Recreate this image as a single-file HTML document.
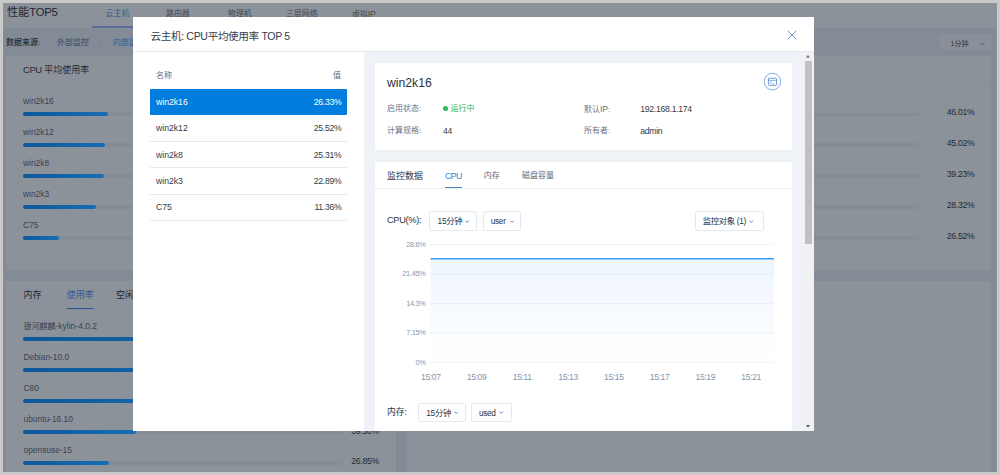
<!DOCTYPE html>
<html lang="zh-CN">
<head>
<meta charset="utf-8">
<title>性能TOP5</title>
<style>
*{box-sizing:border-box;margin:0;padding:0}
html,body{width:1000px;height:475px;overflow:hidden}
body{background:#c9c9c9;font-family:"Liberation Sans","Noto Sans CJK SC",sans-serif;color:#2b3340;position:relative}
.abs{position:absolute}
.t{position:absolute;white-space:nowrap;line-height:1;transform:translateY(-50%)}
#page{position:absolute;left:3px;top:3px;width:994px;height:469px;background:#838b96;overflow:hidden}
/* everything inside #page is positioned in page coords minus 3 */
#page .in{position:absolute;left:-3px;top:-3px;width:1000px;height:475px}
.topbar{left:3px;top:3px;width:994px;height:25px;background:#8c929a}
.card{background:#8c929a;border-radius:1.5px}
.dk{color:#2e3540}
.track{position:absolute;height:3.7px;margin-top:-0.2px;border-radius:2px;background:#858c96}
.fill{position:absolute;left:0;top:0;height:100%;border-radius:2px;background:linear-gradient(to right,#0d5899,#176db3)}
.sep{position:absolute;height:1px;background:#868d96}
/* modal */
#modal{position:absolute;left:133px;top:17px;width:680.5px;height:414.1px;background:#fff;overflow:hidden}
#modal .m{position:absolute;left:-133px;top:-17px;width:1000px;height:475px}
.row{position:absolute;left:150.3px;width:196.7px;height:26.3px;border-bottom:1px solid #e6e9ee;font-size:8.67px;color:#333b47}
.row .n{position:absolute;left:5.7px;top:49%;transform:translateY(-50%);line-height:1}
.row .v{position:absolute;right:5.6px;top:49%;transform:translateY(-50%);line-height:1;font-size:8.67px;letter-spacing:-0.3px}
.row.sel{background:#007ddd;color:#fff;border-bottom:none;border-radius:1px}
.sel2{position:absolute;border:1px solid #e4e8ef;border-radius:2px;background:#fff;height:20px;font-size:8.3px;letter-spacing:-0.3px;color:#2b3340}
.sel2 span{position:absolute;left:7.3px;top:50%;transform:translateY(-50%);line-height:1;white-space:nowrap}
.chev{position:absolute;top:50%;margin-top:-1.2px}
.lbl{color:#6b7686;font-size:8px}
.val{color:#333b47;font-size:8.67px;letter-spacing:-0.28px}
</style>
</head>
<body>
<div id="page"><div class="in">
  <div class="abs topbar"></div>
  <div class="t dk" style="left:7px;top:13.4px;font-size:11.3px;color:#1f2630;letter-spacing:-0.2px">性能TOP5</div>
  <div class="t" style="left:105.6px;top:13.8px;font-size:7.9px;color:#2f5a94">云主机</div>
  <div class="abs" style="left:92px;top:26.4px;width:52px;height:2px;background:#56709a"></div>
  <div class="t" style="left:166px;top:13.8px;font-size:7.9px;color:#414955">路由器</div>
  <div class="t" style="left:228px;top:13.8px;font-size:7.9px;color:#414955">物理机</div>
  <div class="t" style="left:286px;top:13.8px;font-size:7.9px;color:#414955">三层网络</div>
  <div class="t" style="left:352px;top:13.8px;font-size:7.9px;color:#414955">虚拟<span style="font-size:8.8px;letter-spacing:-0.2px">IP</span></div>

  <div class="t" style="left:6px;top:42.5px;font-size:8px;color:#232a34;font-weight:500">数据来源:</div>
  <div class="t" style="left:57px;top:42.5px;font-size:8px;color:#3f4855">外部监控</div>
  <div class="abs" style="left:100px;top:37px;width:1px;height:11px;background:#7b838d"></div>
  <div class="t" style="left:113px;top:42.5px;font-size:8px;color:#2f5a94">内部监控</div>

  <div class="abs" style="left:940.3px;top:34.3px;width:50.7px;height:15.7px;background:#8a9099;border-radius:1px"></div>
  <div class="t" style="left:950.5px;top:43.3px;font-size:7px;color:#2e3540">1分钟</div>
  <svg class="abs" style="left:980px;top:41.6px" width="5.2" height="3.6" viewBox="0 0 5.2 3.6"><path d="M0.5 0.6 L2.6 2.8 L4.7 0.6" fill="none" stroke="#3c5f92" stroke-width="0.9"/></svg>

  <!-- left card 1 -->
  <div class="abs card" style="left:6px;top:56.3px;width:390px;height:213.7px"></div>
  <div class="sep" style="left:6px;top:83.3px;width:390px"></div>
  <div class="t" style="left:23px;top:70px;font-size:9px;color:#232a34"><span style="font-size:9.4px;letter-spacing:-0.35px">CPU</span> 平均使用率</div>
  <div class="t" style="left:23px;top:101.3px;font-size:8.4px;color:#3a424e">win2k16</div>
  <div class="track" style="left:23px;top:112.5px;width:320px"><div class="fill" style="width:85px"></div></div>
  <div class="t" style="left:23px;top:132.2px;font-size:8.4px;color:#3a424e">win2k12</div>
  <div class="track" style="left:23px;top:143.4px;width:320px"><div class="fill" style="width:82px"></div></div>
  <div class="t" style="left:23px;top:163px;font-size:8.4px;color:#3a424e">win2k8</div>
  <div class="track" style="left:23px;top:174.3px;width:320px"><div class="fill" style="width:81px"></div></div>
  <div class="t" style="left:23px;top:193.9px;font-size:8.4px;color:#3a424e">win2k3</div>
  <div class="track" style="left:23px;top:205.2px;width:320px"><div class="fill" style="width:73px"></div></div>
  <div class="t" style="left:23px;top:224.8px;font-size:8.4px;color:#3a424e">C75</div>
  <div class="track" style="left:23px;top:236.1px;width:320px"><div class="fill" style="width:36px"></div></div>

  <!-- left card 2 -->
  <div class="abs card" style="left:6px;top:280.8px;width:390px;height:200px"></div>
  <div class="sep" style="left:6px;top:308.5px;width:390px"></div>
  <div class="t" style="left:23.5px;top:295px;font-size:9px;color:#232a34">内存</div>
  <div class="t" style="left:66.8px;top:295px;font-size:9px;color:#2f5a94">使用率</div>
  <div class="abs" style="left:66.8px;top:307.8px;width:27px;height:1.5px;background:#1f5a9c"></div>
  <div class="t" style="left:116px;top:295px;font-size:9px;color:#232a34">空闲</div>
  <div class="t" style="left:23.5px;top:326px;font-size:8.5px;color:#3a424e"><span style="font-size:8px">银河麒麟</span>-kylin-4.0.2</div>
  <div class="track" style="left:23px;top:337.5px;width:320px"><div class="fill" style="width:300px"></div></div>
  <div class="t" style="left:23.5px;top:356.8px;font-size:8.4px;color:#3a424e">Debian-10.0</div>
  <div class="track" style="left:23px;top:368.4px;width:320px"><div class="fill" style="width:280px"></div></div>
  <div class="t" style="left:23.5px;top:387.7px;font-size:8.4px;color:#3a424e">C80</div>
  <div class="track" style="left:23px;top:399.4px;width:320px"><div class="fill" style="width:200px"></div></div>
  <div class="t" style="left:23.5px;top:418.7px;font-size:8.4px;color:#3a424e">ubuntu-16.10</div>
  <div class="track" style="left:23px;top:430.3px;width:320px"><div class="fill" style="width:113px"></div></div>
  <div class="t" style="left:351.3px;top:430.5px;font-size:8.67px;letter-spacing:-0.3px;color:#232a34">39.50%</div>
  <div class="t" style="left:23.5px;top:449.6px;font-size:8.4px;color:#3a424e">opensuse-15</div>
  <div class="track" style="left:23px;top:461px;width:320px"><div class="fill" style="width:86px"></div></div>
  <div class="t" style="left:351.3px;top:461.3px;font-size:8.67px;letter-spacing:-0.3px;color:#232a34">26.85%</div>

  <!-- right card -->
  <div class="abs card" style="left:407px;top:56.3px;width:584px;height:213.7px"></div>
  <div class="sep" style="left:407px;top:83.3px;width:584px"></div>
  <div class="track" style="left:424px;top:112.7px;width:495px"></div>
  <div class="track" style="left:424px;top:143.6px;width:495px"></div>
  <div class="track" style="left:424px;top:174.5px;width:495px"></div>
  <div class="track" style="left:424px;top:205.4px;width:495px"></div>
  <div class="track" style="left:424px;top:236.3px;width:495px"></div>
  <div class="t" style="left:946.8px;top:112.4px;font-size:8.67px;letter-spacing:-0.3px;color:#232a34">46.01%</div>
  <div class="t" style="left:946.8px;top:143.3px;font-size:8.67px;letter-spacing:-0.3px;color:#232a34">45.02%</div>
  <div class="t" style="left:946.8px;top:174.3px;font-size:8.67px;letter-spacing:-0.3px;color:#232a34">39.23%</div>
  <div class="t" style="left:946.8px;top:205.2px;font-size:8.67px;letter-spacing:-0.3px;color:#232a34">28.32%</div>
  <div class="t" style="left:946.8px;top:236.1px;font-size:8.67px;letter-spacing:-0.3px;color:#232a34">26.52%</div>
  <div class="abs card" style="left:407px;top:280.8px;width:584px;height:200px"></div>
</div></div>

<div id="modal"><div class="m">
  <div class="t" style="left:150.5px;top:35.7px;font-size:10.6px;letter-spacing:-0.36px;color:#363e4b">云主机: CPU平均使用率 TOP 5</div>
  <svg class="abs" style="left:787px;top:29.5px" width="10" height="10" viewBox="0 0 10 10"><path d="M0.8 0.8 L9.2 9.2 M9.2 0.8 L0.8 9.2" fill="none" stroke="#6f8fc6" stroke-width="1"/></svg>
  <div class="abs" style="left:133px;top:50.5px;width:680px;height:1px;background:#e4e8ee"></div>
  <!-- right panel bg -->
  <div class="abs" style="left:363.5px;top:51.5px;width:450px;height:380px;background:#eff2f7"></div>
  <!-- list -->
  <div class="t" style="left:156px;top:75.5px;font-size:8px;color:#626b79">名称</div>
  <div class="t" style="left:333px;top:75.5px;font-size:8px;color:#626b79">值</div>
  <div class="row sel" style="top:88.8px;height:26px"><span class="n">win2k16</span><span class="v">26.33%</span></div>
  <div class="row" style="top:115.8px"><span class="n">win2k12</span><span class="v">25.52%</span></div>
  <div class="row" style="top:142.15px"><span class="n">win2k8</span><span class="v">25.31%</span></div>
  <div class="row" style="top:168.5px"><span class="n">win2k3</span><span class="v">22.89%</span></div>
  <div class="row" style="top:194.8px"><span class="n">C75</span><span class="v">11.36%</span></div>

  <!-- info card -->
  <div class="abs" style="left:375px;top:62.6px;width:417.2px;height:87.7px;background:#fff"></div>
  <div class="t" style="left:387px;top:82.5px;font-size:12.2px;color:#2b3340">win2k16</div>
  <svg class="abs" style="left:763px;top:72.3px" width="19" height="19" viewBox="0 0 19 19">
    <circle cx="9.45" cy="9.6" r="8.3" fill="#fff" stroke="#6f9bdb" stroke-width="0.85"/>
    <rect x="5.4" y="6.2" width="8.2" height="7.1" rx="0.8" fill="none" stroke="#4f86d0" stroke-width="0.85"/>
    <path d="M5.4 8.3 H13.6" stroke="#4f86d0" stroke-width="0.7"/>
    <path d="M7.2 9.6 L8.5 10.6 L7.2 11.6 M9.3 11.8 H10.9" fill="none" stroke="#4f86d0" stroke-width="0.6"/>
  </svg>
  <div class="t lbl" style="left:387px;top:108.6px">启用状态:</div>
  <div class="abs" style="left:442.8px;top:105.9px;width:5.5px;height:5.5px;border-radius:50%;background:#2fb85f"></div>
  <div class="t" style="left:450.5px;top:108.6px;font-size:8px;color:#2db35a">运行中</div>
  <div class="t lbl" style="left:584px;top:108.6px">默认<span style="font-size:8.8px;letter-spacing:-0.2px">IP</span>:</div>
  <div class="t val" style="left:640.2px;top:108.6px">192.168.1.174</div>
  <div class="t lbl" style="left:387px;top:131px">计算规格:</div>
  <div class="t val" style="left:443px;top:131px">44</div>
  <div class="t lbl" style="left:584px;top:131px">所有者:</div>
  <div class="t val" style="left:640.2px;top:131px">admin</div>

  <!-- monitor card -->
  <div class="abs" style="left:375px;top:161.5px;width:417.2px;height:280px;background:#fff"></div>
  <div class="t" style="left:387px;top:175.7px;font-size:9px;color:#2b3340">监控数据</div>
  <div class="t" style="left:445px;top:175.7px;font-size:8.8px;letter-spacing:-0.6px;color:#3d78c4">CPU</div>
  <div class="abs" style="left:445px;top:186.8px;width:16.5px;height:2px;background:#4a82cc"></div>
  <div class="t" style="left:483.7px;top:175.7px;font-size:8px;color:#5f6876">内存</div>
  <div class="t" style="left:522px;top:175.7px;font-size:8px;color:#5f6876">磁盘容量</div>
  <div class="abs" style="left:375px;top:188px;width:417px;height:1px;background:#eef0f4"></div>

  <div class="t" style="left:387px;top:220.7px;font-size:9.3px;letter-spacing:-0.36px;color:#2b3340">CPU(%):</div>
  <div class="sel2" style="left:429.3px;top:211px;width:48px"><span>15分钟</span>
    <svg class="chev" style="left:34.8px" width="4.6" height="3.2" viewBox="0 0 4.6 3.2"><path d="M0.5 0.6 L2.3 2.4 L4.1 0.6" fill="none" stroke="#5a8cdb" stroke-width="1"/></svg></div>
  <div class="sel2" style="left:483px;top:211px;width:38px"><span style="left:6.7px">user</span>
    <svg class="chev" style="left:25.5px" width="4.6" height="3.2" viewBox="0 0 4.6 3.2"><path d="M0.5 0.6 L2.3 2.4 L4.1 0.6" fill="none" stroke="#5a8cdb" stroke-width="1"/></svg></div>
  <div class="sel2" style="left:695px;top:211px;width:69px"><span style="left:6.8px">监控对象 (1)</span>
    <svg class="chev" style="left:53.3px" width="4.6" height="3.2" viewBox="0 0 4.6 3.2"><path d="M0.5 0.6 L2.3 2.4 L4.1 0.6" fill="none" stroke="#5a8cdb" stroke-width="1"/></svg></div>

  <!-- chart -->
  <svg class="abs" style="left:375px;top:235px" width="417" height="155" viewBox="375 235 417 155" font-family="'Liberation Sans','Noto Sans CJK SC',sans-serif">
    <defs><linearGradient id="ag" x1="0" y1="0" x2="0" y2="1"><stop offset="0" stop-color="#eef5fe"/><stop offset="1" stop-color="#ffffff"/></linearGradient></defs>
    <rect x="430.6" y="258.5" width="343.4" height="104" fill="url(#ag)"/>
    <g stroke="#d9dde3" stroke-width="0.8" stroke-dasharray="2 2">
      <path d="M430.6 244.6 H774"/><path d="M430.6 274.1 H774"/><path d="M430.6 303.6 H774"/><path d="M430.6 333.1 H774"/><path d="M430.6 362.5 H774"/>
    </g>
    <path d="M430.6 258.8 H774" stroke="#3d9bf3" stroke-width="1.5"/>
    <g font-size="7.4" fill="#8795ad" text-anchor="end" style="letter-spacing:-0.3px">
      <text x="425.6" y="246.5">28.6%</text><text x="425.6" y="276">21.45%</text><text x="425.6" y="305.6">14.3%</text><text x="425.6" y="335">7.15%</text><text x="425.6" y="364.5">0%</text>
    </g>
    <g font-size="8.6" fill="#8795ad" text-anchor="middle" style="letter-spacing:-0.4px">
      <text x="430.8" y="380.4">15:07</text><text x="476.6" y="380.4">15:09</text><text x="522.3" y="380.4">15:11</text><text x="568.1" y="380.4">15:13</text><text x="613.8" y="380.4">15:15</text><text x="659.6" y="380.4">15:17</text><text x="705.3" y="380.4">15:19</text><text x="751.1" y="380.4">15:21</text>
    </g>
  </svg>

  <div class="t" style="left:387px;top:411.7px;font-size:8.8px;color:#2b3340">内存:</div>
  <div class="sel2" style="left:418px;top:403px;height:19px;width:48px"><span>15分钟</span>
    <svg class="chev" style="left:34.8px" width="4.6" height="3.2" viewBox="0 0 4.6 3.2"><path d="M0.5 0.6 L2.3 2.4 L4.1 0.6" fill="none" stroke="#5a8cdb" stroke-width="1"/></svg></div>
  <div class="sel2" style="left:471.2px;top:403px;height:19px;width:40.5px"><span style="left:6.7px">used</span>
    <svg class="chev" style="left:27.3px" width="4.6" height="3.2" viewBox="0 0 4.6 3.2"><path d="M0.5 0.6 L2.3 2.4 L4.1 0.6" fill="none" stroke="#5a8cdb" stroke-width="1"/></svg></div>

  <!-- scrollbar -->
  <div class="abs" style="left:803.3px;top:51.5px;width:10.2px;height:380px;background:#f1f1f1"></div>
  <div class="abs" style="left:805px;top:61.3px;width:7px;height:183px;background:#c1c1c1"></div>
  <svg class="abs" style="left:806.4px;top:55.3px" width="4" height="2.6" viewBox="0 0 4 2.6"><path d="M0 2.6 L2 0 L4 2.6 Z" fill="#6a6a6a"/></svg>
  <svg class="abs" style="left:806.4px;top:425.3px" width="4" height="2.6" viewBox="0 0 4 2.6"><path d="M0 0 L2 2.6 L4 0 Z" fill="#505050"/></svg>
</div></div>
</body>
</html>
